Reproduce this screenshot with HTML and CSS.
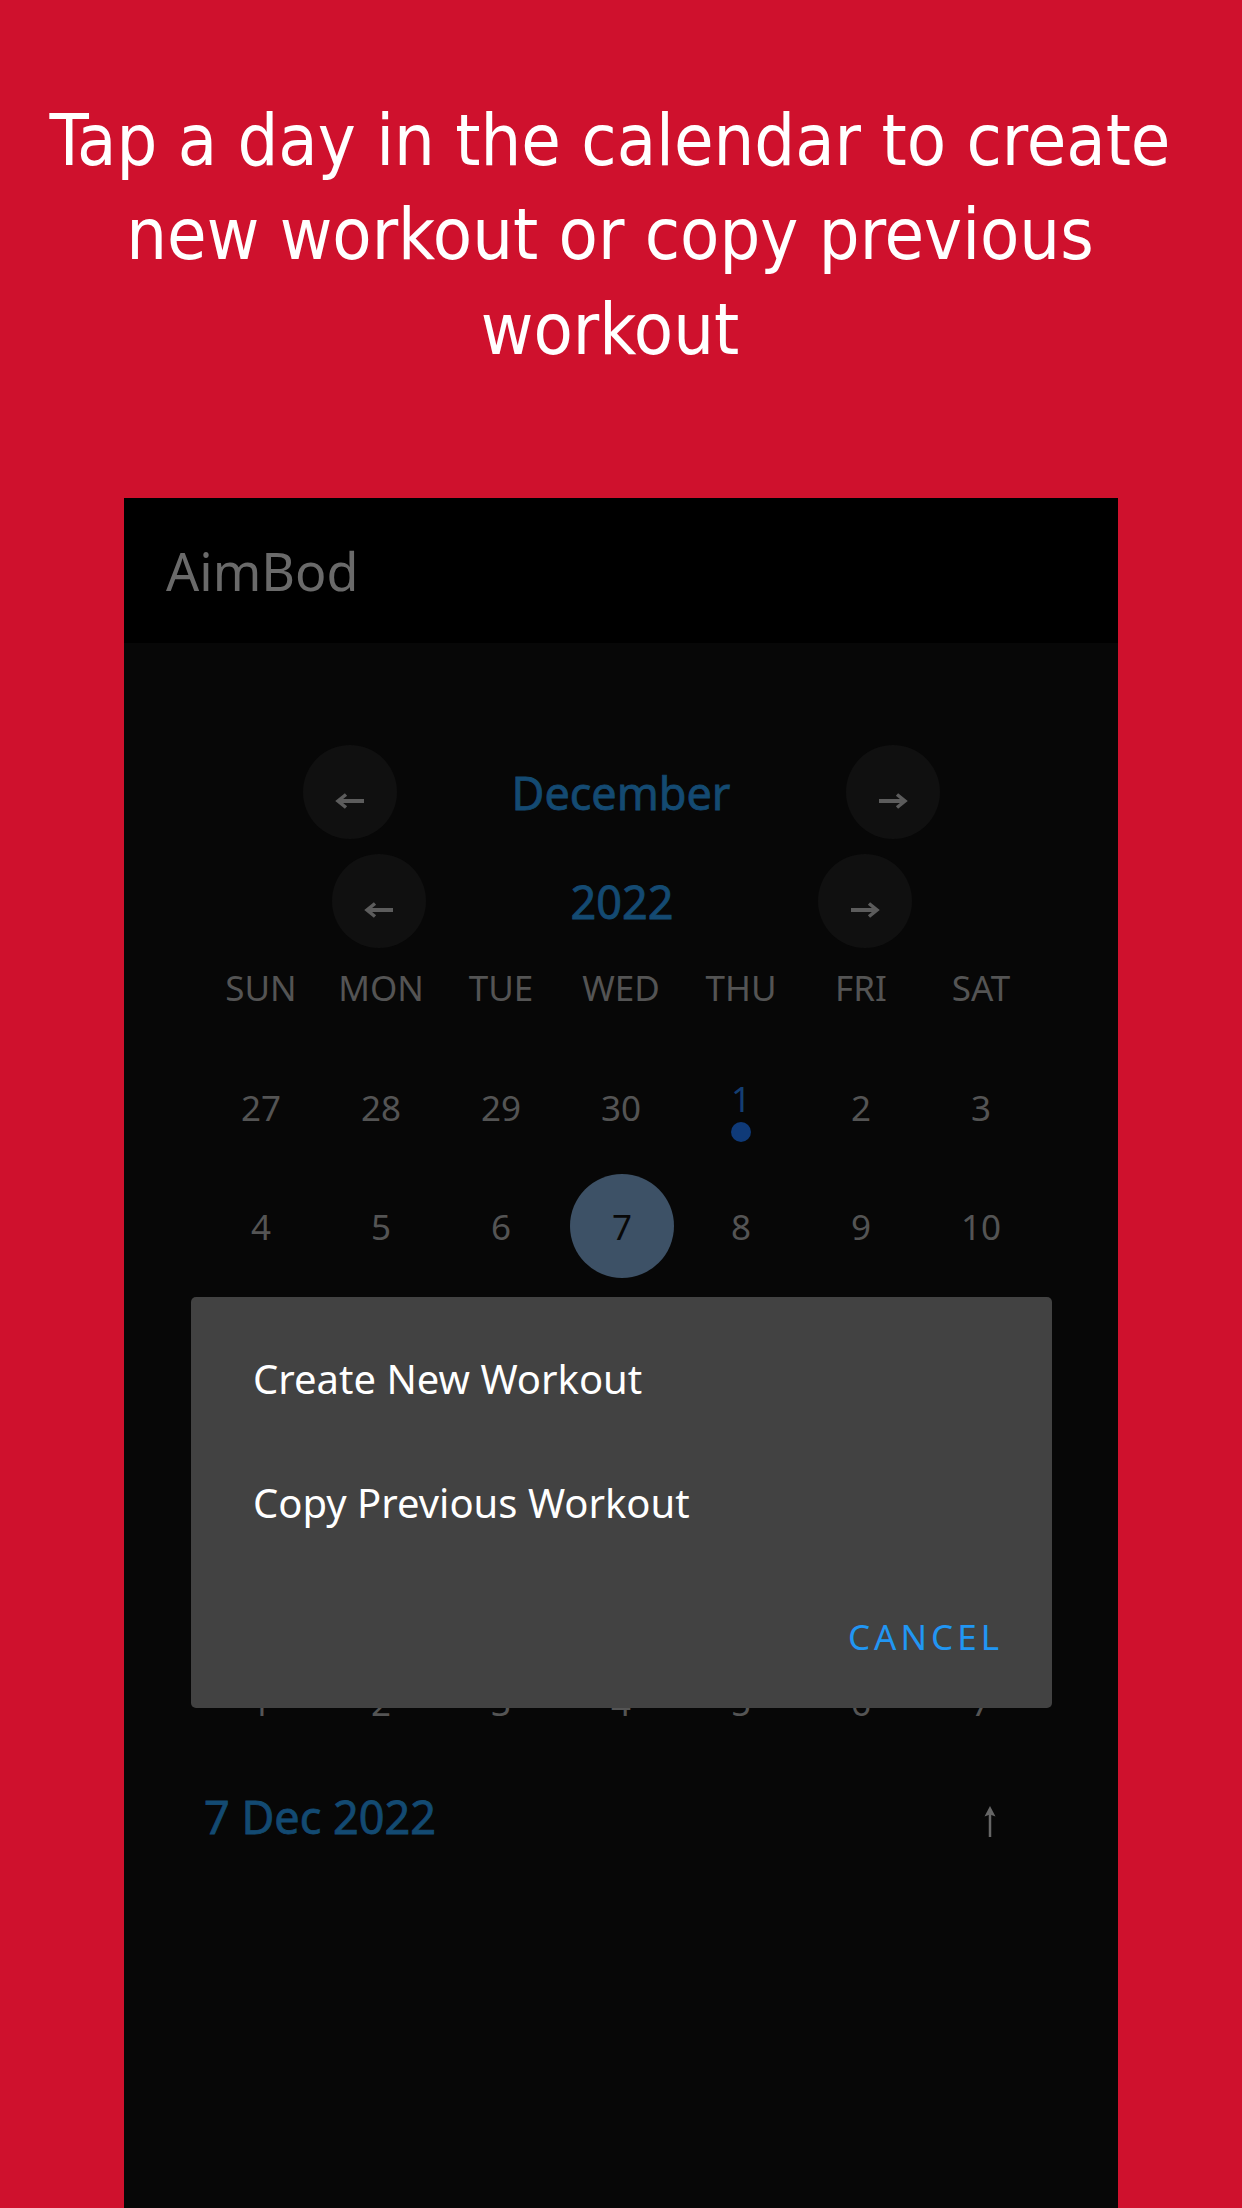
FILE: index.html
```
<!DOCTYPE html>
<html lang="en">
<head>
<meta charset="utf-8">
<title>AimBod</title>
<link rel="stylesheet" href="styles.css">
</head>
<body>
<div class="page">
  <header class="promo">
    <p class="promo-text">Tap a day in the calendar to create new workout or copy previous workout</p>
  </header>
  <section class="phone">
    <div class="appbar"><span class="app-title">AimBod</span></div>
    <div class="content">
      <div class="nav-row nav-month">
        <button class="nav-btn" type="button"><svg class="arrow-h" width="30" height="16" viewBox="0 0 30 16"><path d="M29 8H4" stroke="#5c5c5c" stroke-width="4" fill="none"/><path d="M11 1.5L3 8L11 14.5" stroke="#5c5c5c" stroke-width="3.5" fill="none"/></svg></button>
        <span class="nav-label">December</span>
        <button class="nav-btn" type="button"><svg class="arrow-h" width="30" height="16" viewBox="0 0 30 16"><path d="M1 8H26" stroke="#5c5c5c" stroke-width="4" fill="none"/><path d="M19 1.5L27 8L19 14.5" stroke="#5c5c5c" stroke-width="3.5" fill="none"/></svg></button>
      </div>
      <div class="nav-row nav-year">
        <button class="nav-btn" type="button"><svg class="arrow-h" width="30" height="16" viewBox="0 0 30 16"><path d="M29 8H4" stroke="#5c5c5c" stroke-width="4" fill="none"/><path d="M11 1.5L3 8L11 14.5" stroke="#5c5c5c" stroke-width="3.5" fill="none"/></svg></button>
        <span class="nav-label">2022</span>
        <button class="nav-btn" type="button"><svg class="arrow-h" width="30" height="16" viewBox="0 0 30 16"><path d="M1 8H26" stroke="#5c5c5c" stroke-width="4" fill="none"/><path d="M19 1.5L27 8L19 14.5" stroke="#5c5c5c" stroke-width="3.5" fill="none"/></svg></button>
      </div>
      <div class="weekdays">
        <span>SUN</span><span>MON</span><span>TUE</span><span>WED</span><span>THU</span><span>FRI</span><span>SAT</span>
      </div>
      <div class="days">
        <span class="day">27</span><span class="day">28</span><span class="day">29</span><span class="day">30</span><span class="day has-dot"><span class="day-num">1</span><span class="dot"></span></span><span class="day">2</span><span class="day">3</span>
        <span class="day">4</span><span class="day">5</span><span class="day">6</span><span class="day selected"><span class="sel-circle">7</span></span><span class="day">8</span><span class="day">9</span><span class="day">10</span>
        <span class="day">11</span><span class="day">12</span><span class="day">13</span><span class="day">14</span><span class="day">15</span><span class="day">16</span><span class="day">17</span>
        <span class="day">18</span><span class="day">19</span><span class="day">20</span><span class="day">21</span><span class="day">22</span><span class="day">23</span><span class="day">24</span>
        <span class="day">25</span><span class="day">26</span><span class="day">27</span><span class="day">28</span><span class="day">29</span><span class="day">30</span><span class="day">31</span>
        <span class="day">1</span><span class="day">2</span><span class="day">3</span><span class="day">4</span><span class="day">5</span><span class="day">6</span><span class="day">7</span>
      </div>
      <div class="date-row">
        <span class="date-label">7 Dec 2022</span>
        <svg class="arrow-up" width="16" height="31" viewBox="0 0 16 31"><path d="M8 31V4" stroke="#666" stroke-width="2.5" fill="none"/><path d="M8 0L13.5 10.5L8 8.5L2.5 10.5Z" fill="#666"/></svg>
      </div>
    </div>
    <div class="dialog">
      <div class="dialog-item">Create New Workout</div>
      <div class="dialog-item">Copy Previous Workout</div>
      <div class="dialog-actions"><span class="btn-cancel">CANCEL</span></div>
    </div>
  </section>
</div>
</body>
</html>
```
FILE: styles.css
```
html, body {
  margin: 0;
  padding: 0;
}
body {
  background: #cf112d;
  width: 1242px;
  height: 2208px;
  overflow: hidden;
}
.page {
  width: 1242px;
  height: 2208px;
}
.promo {
  box-sizing: border-box;
  height: 498px;
  padding: 93.5px 42px 0 20px;
}
.promo-text {
  margin: 0;
  text-align: center;
  color: #ffffff;
  font-family: "DejaVu Sans Condensed", "DejaVu Sans", sans-serif;
  font-stretch: condensed;
  font-size: 71.5px;
  line-height: 94.6px;
}
.phone {
  position: relative;
  margin: 0 124px;
  width: 994px;
  height: 1710px;
  background: #070707;
  font-family: "Noto Sans", "Open Sans", sans-serif;
}
.appbar {
  height: 145px;
  background: #000000;
  display: flex;
  align-items: center;
  padding-left: 42px;
}
.app-title {
  font-size: 52px;
  line-height: 1;
  color: #6a6a6a;
}
.content {
  padding-top: 102px;
}
.nav-row {
  display: grid;
  grid-template-columns: 94px 1fr 94px;
  align-items: center;
  margin: 0 auto;
  height: 94px;
}
.nav-month {
  width: 637px;
}
.nav-year {
  width: 580px;
  margin-top: 15px;
  position: relative;
  left: 1px;
}
.nav-btn {
  width: 94px;
  height: 94px;
  border: 0;
  padding: 0;
  border-radius: 50%;
  background: #101010;
  display: flex;
  align-items: center;
  justify-content: center;
}
.arrow-h {
  margin-top: 17px;
}
.nav-label {
  text-align: center;
  font-size: 45px;
  line-height: 1;
  color: #144a72;
  -webkit-text-stroke: 0.8px #144a72;
}
.weekdays {
  display: grid;
  grid-template-columns: repeat(7, 120px);
  width: 840px;
  margin: 9px auto 0;
  height: 60px;
  align-items: center;
  justify-items: center;
  font-size: 35px;
  line-height: 1;
  color: #545454;
}
.days {
  display: grid;
  grid-template-columns: repeat(7, 120px);
  grid-auto-rows: 119px;
  width: 840px;
  margin: 30.5px auto 0;
  font-size: 35px;
  line-height: 1;
  color: #545454;
}
.day {
  display: flex;
  flex-direction: column;
  align-items: center;
  justify-content: center;
  box-sizing: border-box;
}
.has-dot {
  padding-top: 9px;
  color: #143e72;
}
.dot {
  width: 20px;
  height: 20px;
  border-radius: 50%;
  background: #0f3a78;
  margin-top: 6px;
}
.sel-circle {
  width: 104px;
  height: 104px;
  border-radius: 50%;
  background: #3d5166;
  color: #080808;
  display: flex;
  align-items: center;
  justify-content: center;
  margin-left: 2px;
}
.date-row {
  display: flex;
  justify-content: space-between;
  align-items: center;
  margin-top: 32.7px;
  padding: 0 120px 0 80px;
}
.date-label {
  font-size: 45px;
  line-height: 1;
  color: #134a72;
  -webkit-text-stroke: 0.8px #134a72;
}
.arrow-up {
  margin-top: 10px;
}
.dialog {
  position: absolute;
  left: 67px;
  top: 799px;
  width: 861px;
  height: 411px;
  box-sizing: border-box;
  background: #424242;
  border-radius: 5px;
  padding-top: 20px;
  display: flex;
  flex-direction: column;
}
.dialog-item {
  height: 124px;
  display: flex;
  align-items: center;
  padding-left: 62px;
  font-size: 40px;
  line-height: 1;
  color: #ffffff;
}
.dialog-actions {
  flex: 1;
  display: flex;
  align-items: center;
  justify-content: flex-end;
  padding-right: 49px;
}
.btn-cancel {
  font-size: 35px;
  line-height: 1;
  letter-spacing: 4px;
  color: #2196f3;
}
```
